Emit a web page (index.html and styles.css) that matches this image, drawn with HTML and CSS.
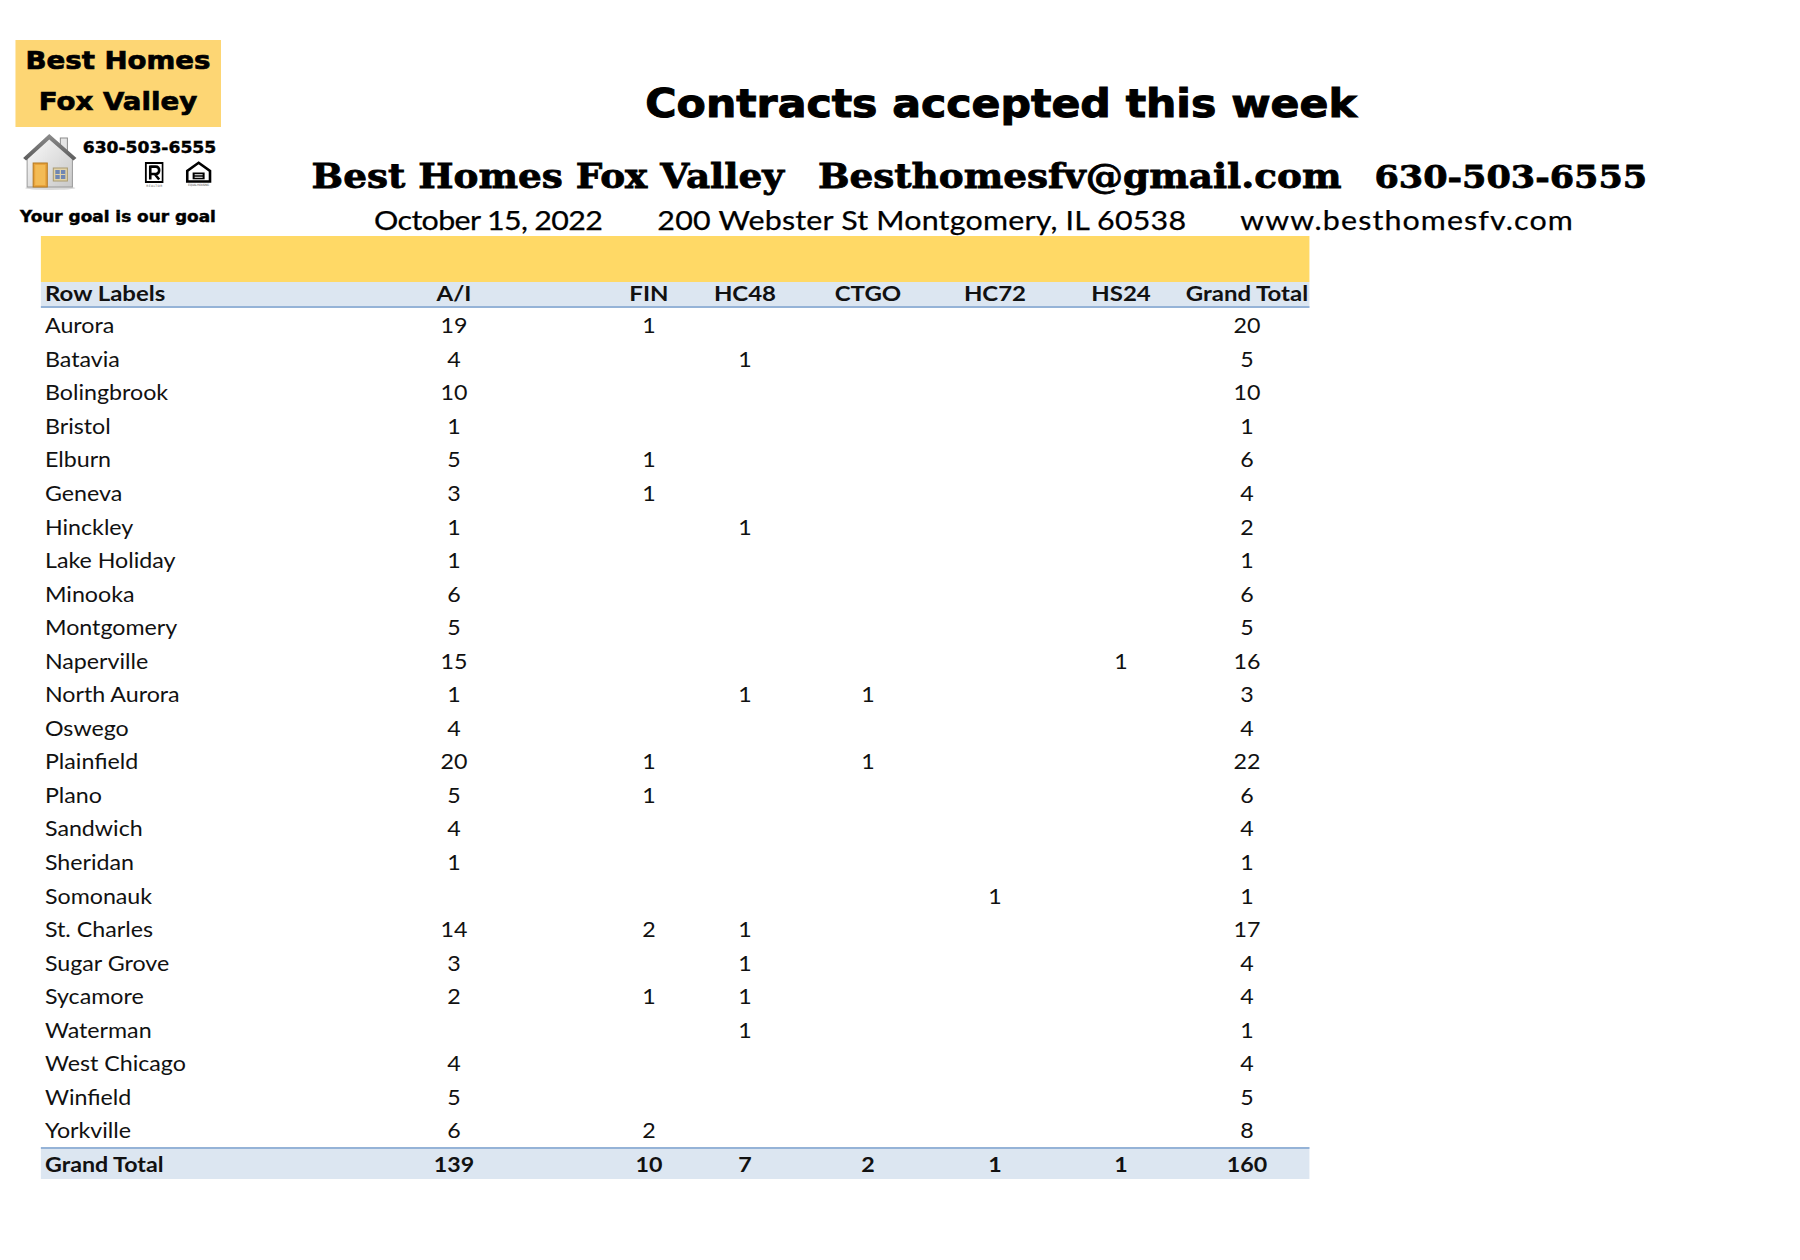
FILE: index.html
```html
<!DOCTYPE html>
<html lang="en">
<head>
<meta charset="utf-8">
<title>Contracts accepted this week</title>
<link rel="stylesheet" href="styles.css">
</head>
<body>
<div class="page">
  <header class="top">
    <div class="logo">
      <div class="logo-box"><div>Best Homes</div><div>Fox Valley</div></div>
      <div class="logo-mid">
        <svg class="house" viewBox="0 0 56 58" preserveAspectRatio="none">
          <defs>
            <linearGradient id="wall" x1="0" y1="0" x2="1" y2="1"><stop offset="0" stop-color="#fbfbfb"/><stop offset="1" stop-color="#c8c8c8"/></linearGradient>
            <linearGradient id="roof" x1="0" y1="0" x2="0" y2="1"><stop offset="0" stop-color="#8c8c8c"/><stop offset="1" stop-color="#5c5c5c"/></linearGradient>
          </defs>
          <ellipse cx="28" cy="56" rx="25" ry="2" fill="#dadada"/>
          <rect x="38" y="6" width="7" height="14" fill="#e6e6e6" stroke="#8c8c8c" stroke-width="1"/>
          <path d="M5 24 L27 5 L50 24 V55 H5 Z" fill="url(#wall)" stroke="#9a9a9a" stroke-width="1"/>
          <path d="M1 26 L27 2 L54 26 L51 28.5 L27 7.5 L4 28.5 Z" fill="url(#roof)"/>
          <rect x="11" y="31" width="14" height="24" fill="#e9a33b" stroke="#b4781f" stroke-width="1"/>
          <rect x="13" y="33" width="10" height="20" fill="#f3bb55"/>
          <rect x="31" y="36" width="14" height="13" fill="#e2d3a8" stroke="#a99a70" stroke-width="1"/>
          <rect x="33" y="38" width="10" height="9" fill="#7087b3"/>
          <path d="M38 38 V47 M33 42.5 H43" stroke="#e2d3a8" stroke-width="1.2"/>
        </svg>
        <div class="logo-right">
          <div class="logo-phone">630-503-6555</div>
          <div class="logo-icons">
            <svg class="realtor" viewBox="0 0 19 27" preserveAspectRatio="none">
              <rect x="1" y="1" width="17" height="19" fill="#fff" stroke="#000" stroke-width="2"/>
              <path d="M5.5 3.5 V17.5 M5.5 4.6 H11 Q14.4 4.6 14.4 8.3 Q14.4 12 11 12 H5.5 M10 12 L14.4 17.5" fill="none" stroke="#000" stroke-width="2.6"/>
              <text x="9.5" y="25.5" font-size="3" text-anchor="middle" textLength="16" font-family="DejaVu Sans" fill="#555">REALTOR</text>
            </svg>
            <svg class="eho" viewBox="0 0 26 27" preserveAspectRatio="none">
              <path d="M13 1.8 L24.4 10 V20.5 H1.6 V10 Z" fill="none" stroke="#000" stroke-width="2.6"/>
              <rect x="7" y="11.5" width="12" height="6.8" fill="#000"/>
              <path d="M9 13.8 H17 M9 16.2 H17" stroke="#fff" stroke-width="1.1"/>
              <text x="13" y="25.5" font-size="3" text-anchor="middle" textLength="21" font-family="DejaVu Sans" fill="#555">EQUAL HOUSING</text>
            </svg>
          </div>
        </div>
      </div>
      <div class="logo-tag">Your goal is our goal</div>
    </div>
    <div class="titles">
      <h1 class="title">Contracts accepted this week</h1>
      <div class="contact">
        <span class="c-name">Best Homes Fox Valley</span>
        <span class="c-mail">Besthomesfv@gmail.com</span>
        <span class="c-phone">630-503-6555</span>
      </div>
      <div class="info">
        <span class="i-date">October 15, 2022</span>
        <span class="i-addr">200 Webster St Montgomery, IL 60538</span>
        <span class="i-web">www.besthomesfv.com</span>
      </div>
    </div>
  </header>

  <section class="pivot">
    <div class="band"></div>
    <div class="row head"><span>Row Labels</span><span>A/I</span><span>FIN</span><span>HC48</span><span>CTGO</span><span>HC72</span><span>HS24</span><span>Grand Total</span></div>
    <div class="row"><span>Aurora</span><span>19</span><span>1</span><span></span><span></span><span></span><span></span><span>20</span></div>
    <div class="row"><span>Batavia</span><span>4</span><span></span><span>1</span><span></span><span></span><span></span><span>5</span></div>
    <div class="row"><span>Bolingbrook</span><span>10</span><span></span><span></span><span></span><span></span><span></span><span>10</span></div>
    <div class="row"><span>Bristol</span><span>1</span><span></span><span></span><span></span><span></span><span></span><span>1</span></div>
    <div class="row"><span>Elburn</span><span>5</span><span>1</span><span></span><span></span><span></span><span></span><span>6</span></div>
    <div class="row"><span>Geneva</span><span>3</span><span>1</span><span></span><span></span><span></span><span></span><span>4</span></div>
    <div class="row"><span>Hinckley</span><span>1</span><span></span><span>1</span><span></span><span></span><span></span><span>2</span></div>
    <div class="row"><span>Lake Holiday</span><span>1</span><span></span><span></span><span></span><span></span><span></span><span>1</span></div>
    <div class="row"><span>Minooka</span><span>6</span><span></span><span></span><span></span><span></span><span></span><span>6</span></div>
    <div class="row"><span>Montgomery</span><span>5</span><span></span><span></span><span></span><span></span><span></span><span>5</span></div>
    <div class="row"><span>Naperville</span><span>15</span><span></span><span></span><span></span><span></span><span>1</span><span>16</span></div>
    <div class="row"><span>North Aurora</span><span>1</span><span></span><span>1</span><span>1</span><span></span><span></span><span>3</span></div>
    <div class="row"><span>Oswego</span><span>4</span><span></span><span></span><span></span><span></span><span></span><span>4</span></div>
    <div class="row"><span>Plainfield</span><span>20</span><span>1</span><span></span><span>1</span><span></span><span></span><span>22</span></div>
    <div class="row"><span>Plano</span><span>5</span><span>1</span><span></span><span></span><span></span><span></span><span>6</span></div>
    <div class="row"><span>Sandwich</span><span>4</span><span></span><span></span><span></span><span></span><span></span><span>4</span></div>
    <div class="row"><span>Sheridan</span><span>1</span><span></span><span></span><span></span><span></span><span></span><span>1</span></div>
    <div class="row"><span>Somonauk</span><span></span><span></span><span></span><span></span><span>1</span><span></span><span>1</span></div>
    <div class="row"><span>St. Charles</span><span>14</span><span>2</span><span>1</span><span></span><span></span><span></span><span>17</span></div>
    <div class="row"><span>Sugar Grove</span><span>3</span><span></span><span>1</span><span></span><span></span><span></span><span>4</span></div>
    <div class="row"><span>Sycamore</span><span>2</span><span>1</span><span>1</span><span></span><span></span><span></span><span>4</span></div>
    <div class="row"><span>Waterman</span><span></span><span></span><span>1</span><span></span><span></span><span></span><span>1</span></div>
    <div class="row"><span>West Chicago</span><span>4</span><span></span><span></span><span></span><span></span><span></span><span>4</span></div>
    <div class="row"><span>Winfield</span><span>5</span><span></span><span></span><span></span><span></span><span></span><span>5</span></div>
    <div class="row"><span>Yorkville</span><span>6</span><span>2</span><span></span><span></span><span></span><span></span><span>8</span></div>
    <div class="row total"><span>Grand Total</span><span>139</span><span>10</span><span>7</span><span>2</span><span>1</span><span>1</span><span>160</span></div>
  </section>
</div>
</body>
</html>
```

FILE: styles.css
```css
* { box-sizing: border-box; margin: 0; padding: 0; }
html, body { background: #ffffff; }
body {
  width: 1800px;
  height: 1260px;
  overflow: hidden;
  font-family: "Lato", "Liberation Sans", sans-serif;
  color: #000;
}
.page {
  width: 1629px;
  padding-top: 40px;
  transform: scaleX(1.105);
  transform-origin: 0 0;
}

/* header */
.top { display: flex; height: 196px; }
.logo { width: 200px; padding-left: 13.6px; display: flex; flex-direction: column; }
.logo-box {
  width: 186.4px;
  height: 87px;
  background: #fdd674;
  font-family: "DejaVu Sans", sans-serif;
  font-weight: bold;
  font-size: 25px;
  line-height: 41px;
  text-align: center;
  -webkit-text-stroke: 0.7px #000;
}
.logo-mid { display: flex; margin-top: 5px; height: 58px; }
.house { width: 51px; height: 58px; margin-left: 6.3px; flex: none; }
.logo-right { margin-left: 4px; }
.logo-phone {
  margin-top: 7.5px;
  font-family: "DejaVu Sans", sans-serif;
  font-weight: bold;
  font-size: 15.5px;
  line-height: 16px;
  -webkit-text-stroke: 0.4px #000;
}
.logo-icons { display: flex; margin-top: 6px; padding-left: 56px; gap: 20px; }
.realtor { width: 17.2px; height: 27px; }
.eho { width: 23.5px; height: 27px; margin-top: -1px; }
.logo-tag {
  margin-top: 16.5px;
  font-family: "DejaVu Sans", sans-serif;
  font-weight: bold;
  font-size: 15.3px;
  line-height: 20px;
  padding-left: 4.5px;
  -webkit-text-stroke: 0.45px #000;
}

.titles { flex: 1; }
.title {
  margin-top: 39.5px;
  padding-left: 384px;
  font-family: "DejaVu Sans", sans-serif;
  font-weight: bold;
  font-size: 38.6px;
  line-height: 48px;
  -webkit-text-stroke: 1px #000;
}
.contact {
  margin-top: 28.5px;
  padding-left: 82px;
  display: flex;
  align-items: baseline;
  font-family: "DejaVu Serif", serif;
  font-weight: bold;
  font-size: 33.8px;
  line-height: 40px;
  white-space: nowrap;
  -webkit-text-stroke: 0.8px #000;
}
.c-mail { margin-left: 30.8px; }
.c-phone { margin-left: 29.9px; font-size: 31.7px; }
.info {
  margin-top: 5.5px;
  padding-left: 138.5px;
  display: flex;
  font-size: 27.5px;
  line-height: 34px;
  white-space: nowrap;
  -webkit-text-stroke: 0.25px #000;
}
.i-date { letter-spacing: -0.57px; }
.i-addr { margin-left: 49.8px; letter-spacing: 0.19px; }
.i-web { margin-left: 48.9px; letter-spacing: 1px; }

/* pivot table */
.pivot { margin-left: 37.1px; width: 1147.5px; }
.band { height: 46px; background: #ffd966; }
.row {
  display: grid;
  grid-template-columns: 231.7px 284.1px 68.8px 105px 117.6px 112.3px 115.8px 112.2px;
  height: 33.55px;
  align-items: center;
  font-size: 21px;
  color: #111;
  white-space: nowrap;
}
.row > span { text-align: center; }
.row > span:first-child { text-align: left; padding-left: 3.6px; }
.head {
  height: 26px;
  line-height: 22px;
  align-items: start;
  background: #dce6f1;
  border-bottom: 2px solid #95b3d7;
  font-weight: bold;
  font-size: 21.7px;
}
.total {
  height: 32px;
  line-height: 28px;
  background: #dce6f1;
  border-top: 2px solid #95b3d7;
  font-weight: bold;
}
```
